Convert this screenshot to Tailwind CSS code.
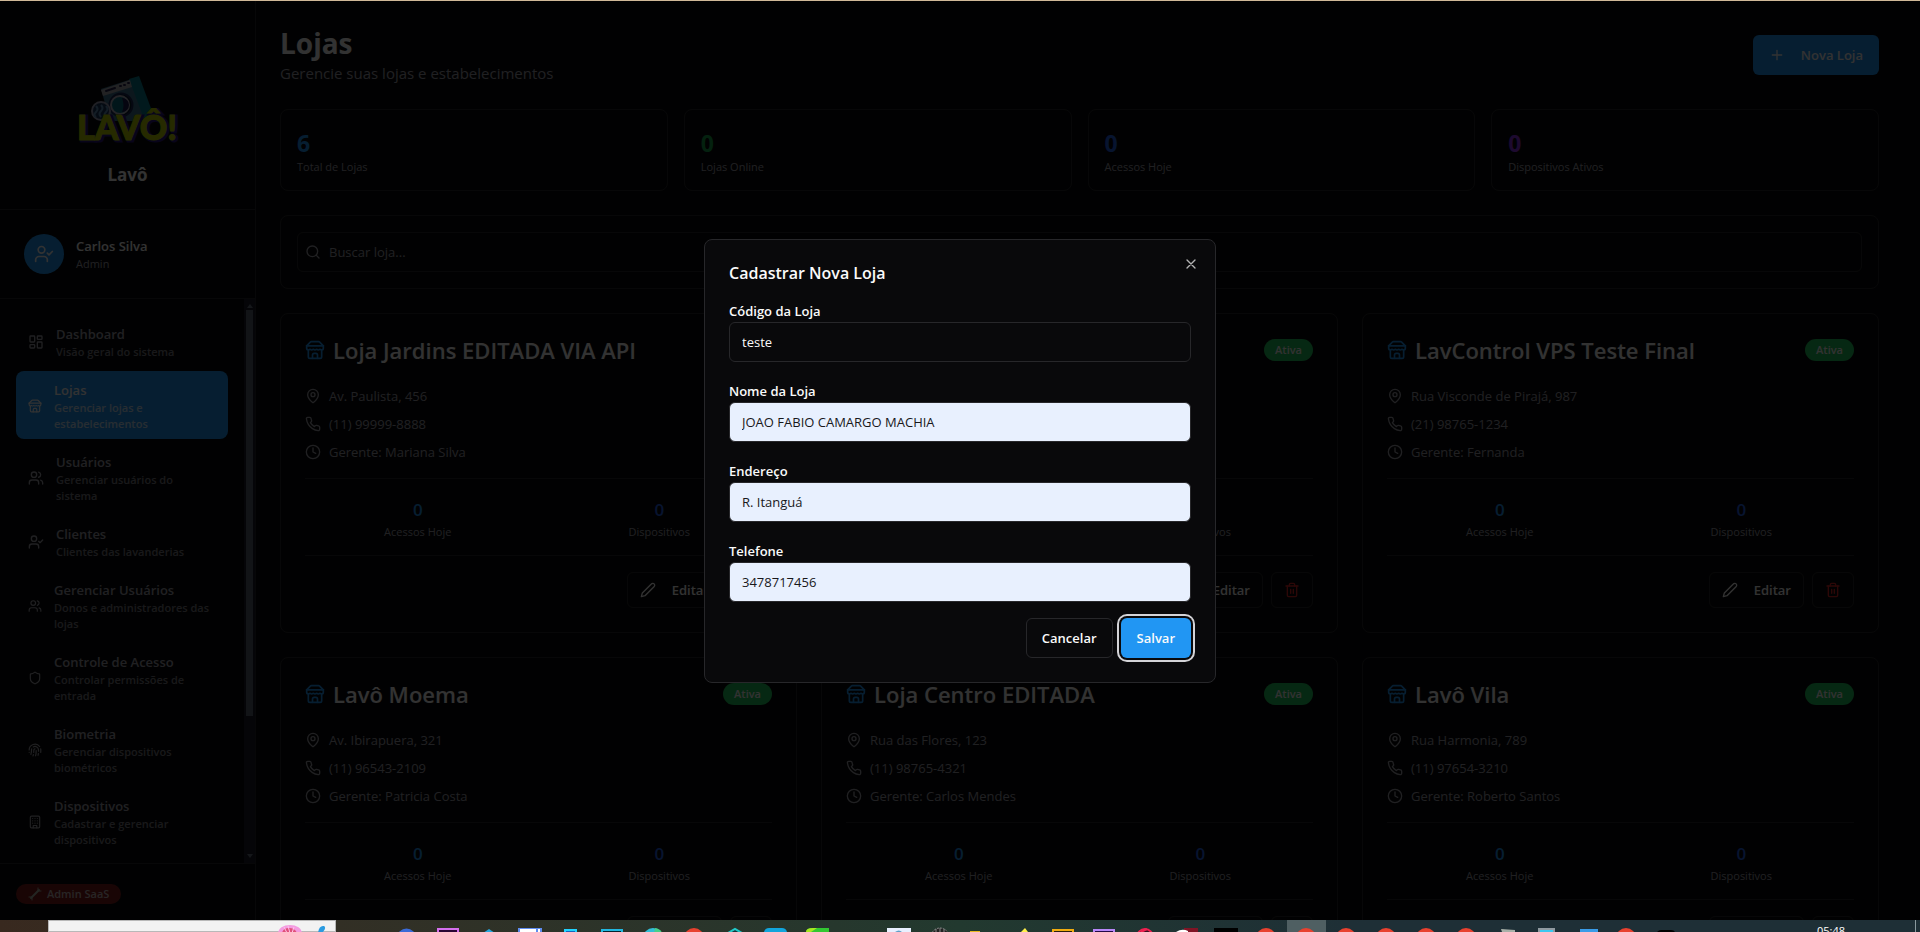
<!DOCTYPE html>
<html lang="pt-BR">
<head>
<meta charset="utf-8">
<title>Lavô - Lojas</title>
<script src="https://cdn.jsdelivr.net/npm/@tailwindcss/browser@4"></script>
</head>
<body class="flex h-screen flex-col overflow-hidden bg-[#09090b] font-['Open_Sans','Noto_Sans',sans-serif] text-[13px] leading-5 text-[#fafafa]">
<!-- Icon set -->
<svg class="hidden" aria-hidden="true">
  <symbol id="i-dashboard" viewBox="0 0 24 24"><rect width="7" height="9" x="3" y="3" rx="1"/><rect width="7" height="5" x="14" y="3" rx="1"/><rect width="7" height="9" x="14" y="12" rx="1"/><rect width="7" height="5" x="3" y="16" rx="1"/></symbol>
  <symbol id="i-store" viewBox="0 0 24 24"><path d="m2 7 4.41-4.41A2 2 0 0 1 7.83 2h8.34a2 2 0 0 1 1.42.59L22 7"/><path d="M4 12v8a2 2 0 0 0 2 2h12a2 2 0 0 0 2-2v-8"/><path d="M15 22v-4a2 2 0 0 0-2-2h-2a2 2 0 0 0-2 2v4"/><path d="M2 7h20"/><path d="M22 7v3a2 2 0 0 1-2 2a2.7 2.7 0 0 1-1.59-.63.7.7 0 0 0-.82 0A2.7 2.7 0 0 1 16 12a2.7 2.7 0 0 1-1.59-.63.7.7 0 0 0-.82 0A2.7 2.7 0 0 1 12 12a2.7 2.7 0 0 1-1.59-.63.7.7 0 0 0-.82 0A2.7 2.7 0 0 1 8 12a2.7 2.7 0 0 1-1.59-.63.7.7 0 0 0-.82 0A2.7 2.7 0 0 1 4 12a2 2 0 0 1-2-2V7"/></symbol>
  <symbol id="i-users" viewBox="0 0 24 24"><path d="M16 21v-2a4 4 0 0 0-4-4H6a4 4 0 0 0-4 4v2"/><circle cx="9" cy="7" r="4"/><path d="M22 21v-2a4 4 0 0 0-3-3.87"/><path d="M16 3.13a4 4 0 0 1 0 7.75"/></symbol>
  <symbol id="i-user-check" viewBox="0 0 24 24"><path d="M16 21v-2a4 4 0 0 0-4-4H6a4 4 0 0 0-4 4v2"/><circle cx="9" cy="7" r="4"/><path d="m16 11 2 2 4-4"/></symbol>
  <symbol id="i-shield" viewBox="0 0 24 24"><path d="M20 13c0 5-3.5 7.5-7.66 8.95a1 1 0 0 1-.67-.01C7.5 20.5 4 18 4 13V6a1 1 0 0 1 1-1c2 0 4.5-1.2 6.24-2.72a1.17 1.17 0 0 1 1.52 0C14.51 3.81 17 5 19 5a1 1 0 0 1 1 1z"/></symbol>
  <symbol id="i-finger" viewBox="0 0 24 24"><path d="M12 10a2 2 0 0 0-2 2c0 1.02-.1 2.51-.26 4"/><path d="M14 13.12c0 2.38 0 6.38-1 8.88"/><path d="M17.29 21.02c.12-.6.43-2.3.5-3.02"/><path d="M2 12a10 10 0 0 1 18-6"/><path d="M2 16h.01"/><path d="M21.8 16c.2-2 .131-5.354 0-6"/><path d="M5 19.5C5.5 18 6 15 6 12a6 6 0 0 1 .34-2"/><path d="M8.65 22c.21-.66.45-1.32.57-2"/><path d="M9 6.8a6 6 0 0 1 9 5.2v2"/></symbol>
  <symbol id="i-building" viewBox="0 0 24 24"><rect width="16" height="20" x="4" y="2" rx="2"/><path d="M9 22v-4h6v4M8 6h.01M16 6h.01M12 6h.01M12 10h.01M12 14h.01M16 10h.01M16 14h.01M8 10h.01M8 14h.01"/></symbol>
  <symbol id="i-search" viewBox="0 0 24 24"><circle cx="11" cy="11" r="8"/><path d="m21 21-4.3-4.3"/></symbol>
  <symbol id="i-pin" viewBox="0 0 24 24"><path d="M20 10c0 4.993-5.539 10.193-7.399 11.799a1 1 0 0 1-1.202 0C9.539 20.193 4 14.993 4 10a8 8 0 0 1 16 0"/><circle cx="12" cy="10" r="3"/></symbol>
  <symbol id="i-phone" viewBox="0 0 24 24"><path d="M22 16.92v3a2 2 0 0 1-2.18 2 19.79 19.79 0 0 1-8.63-3.07 19.5 19.5 0 0 1-6-6 19.79 19.79 0 0 1-3.07-8.67A2 2 0 0 1 4.11 2h3a2 2 0 0 1 2 1.72 12.84 12.84 0 0 0 .7 2.81 2 2 0 0 1-.45 2.11L8.09 9.91a16 16 0 0 0 6 6l1.27-1.27a2 2 0 0 1 2.11-.45 12.84 12.84 0 0 0 2.81.7A2 2 0 0 1 22 16.92z"/></symbol>
  <symbol id="i-clock" viewBox="0 0 24 24"><circle cx="12" cy="12" r="10"/><path d="M12 6v6l4 2"/></symbol>
  <symbol id="i-pen" viewBox="0 0 24 24"><path d="M17 3a2.85 2.83 0 1 1 4 4L7.5 20.5 2 22l1.5-5.5Z"/></symbol>
  <symbol id="i-trash" viewBox="0 0 24 24"><path d="M3 6h18"/><path d="M19 6v14c0 1-1 2-2 2H7c-1 0-2-1-2-2V6"/><path d="M8 6V4c0-1 1-2 2-2h4c1 0 2 1 2 2v2"/><path d="M10 11v6M14 11v6"/></symbol>
  <symbol id="i-plus" viewBox="0 0 24 24"><path d="M5 12h14M12 5v14"/></symbol>
  <symbol id="i-x" viewBox="0 0 24 24"><path d="M18 6 6 18M6 6l12 12"/></symbol>
</svg>

<div class="h-px shrink-0 bg-[#d0b898]"></div>

<div class="relative flex min-h-0 flex-1">
  <!-- Sidebar -->
  <aside class="flex w-64 shrink-0 flex-col border-r border-[#27272a]">
    <div class="flex h-[209px] shrink-0 flex-col items-center border-b border-[#27272a] pt-[72px]">
      <svg class="h-[72px] w-[112px]" viewBox="0 0 112 72" role="img" aria-label="Lavô!">
        <path d="M29 16 66 4 78 38 74 48H38z" fill="#3f7390"/>
        <path d="m57 6 10-3 13 35-8 8z" fill="#087f90"/>
        <path d="m29 17 29-10 2 7-29 9z" fill="#a8a8b0"/>
        <path d="m34 18 9-3M48 13h1M52 12h1M56 10h1" stroke="#24204a" stroke-width="2" stroke-linecap="round"/>
        <circle cx="49" cy="32" r="11.500" fill="#08192c" stroke="#1d2a58" stroke-width="2"/>
        <circle cx="48" cy="32" r="9" fill="#087080" stroke="#b4b4c4" stroke-width="2"/>
        <path d="M50 25a7 7 0 0 1 0 14c2-4 2-9 0-14z" fill="#1c1a50"/>
        <circle cx="29" cy="38" r="9" fill="#1c3a60" stroke="#a0a0b8" stroke-width="2"/>
        <path d="M24 33q3 3 0 6t0 5M29 32q3 3 0 6t0 6M34 33q3 3 0 6t0 4" fill="none" stroke="#6090b8" stroke-width="2"/>
        <g font-family="Lato" font-weight="900" font-size="34">
          <text x="7" y="68" fill="#2a1880" stroke="#2a1880" stroke-width="3" aria-hidden="true">LAVÔ!</text>
          <text x="5" y="67" fill="#bcd200" stroke="#bcd200" stroke-width="1">LAVÔ!</text>
        </g>
      </svg>
      <h2 class="mt-4 text-[17px] leading-7 font-bold">Lavô</h2>
    </div>
    <div class="flex shrink-0 items-center gap-3 border-b border-[#27272a] p-6">
      <div class="flex size-10 items-center justify-center rounded-full bg-[#2196f3]"><svg class="size-5 fill-none stroke-current stroke-2" stroke-linecap="round" stroke-linejoin="round"><use href="#i-user-check"/></svg></div>
      <div><p class="font-semibold">Carlos Silva</p><p class="text-[11px] leading-4 text-[#a1a1aa]">Admin</p></div>
    </div>
    <div class="flex min-h-0 flex-1">
      <nav id="nav" class="flex min-w-0 flex-1 flex-col gap-1 overflow-hidden p-4 font-semibold text-[#a1a1aa]"></nav>
      <!-- Scroll track -->
      <div class="flex w-[11px] flex-col items-center justify-between bg-[#1a1c2c] pt-1 pb-1">
        <svg class="h-[6px] w-[6px] shrink-0 fill-[#6b7280]" viewBox="0 0 6 6"><path d="m0 5 3-4 3 4z"/></svg>
        <div class="mt-px mb-auto h-[73%] w-[7px] bg-[#5c6674]"></div>
        <svg class="h-[6px] w-[6px] shrink-0 fill-[#6b7280]" viewBox="0 0 6 6"><path d="m0 1 3 4 3-4z"/></svg>
      </div>
    </div>
    <div class="flex h-[57px] shrink-0 items-center border-t border-[#27272a] px-4">
      <span class="mt-1 flex h-5 items-center gap-[5px] rounded-full bg-[#7f1d1d] px-3 text-[11px] font-semibold text-[#c4b8b8]">
        <svg class="size-3.5 fill-none stroke-[#b0b8a8]" viewBox="0 0 14 14" stroke-linecap="round"><path d="m3 11 8-8" stroke-width="2"/><path d="M10 1v3h3M1 10h3v3" stroke-width="1"/></svg>
        Admin SaaS
      </span>
    </div>
  </aside>

  <!-- Page -->
  <main class="flex min-w-0 flex-1 flex-col gap-6 overflow-hidden py-6 pr-[41px] pl-6">
    <div class="flex items-center justify-between">
      <div><h1 class="text-[28px] leading-9 font-bold">Lojas</h1><p class="text-[15px] leading-6 text-[#a1a1aa]">Gerencie suas lojas e estabelecimentos</p></div>
      <button type="button" class="flex h-10 items-center gap-4 rounded-md bg-[#2196f3] px-4 font-semibold"><svg class="size-4 fill-none stroke-current stroke-2" stroke-linecap="round"><use href="#i-plus"/></svg>Nova Loja</button>
    </div>
    <div class="grid shrink-0 grid-cols-4 gap-4">
      <div class="rounded-lg border border-[#27272a] px-4 pt-[17px] pb-[15px]"><div class="text-[23px] leading-8 font-bold text-[#2196f3]">6</div><p class="text-[11px] leading-4 text-[#a1a1aa]">Total de Lojas</p></div>
      <div class="rounded-lg border border-[#27272a] px-4 pt-[17px] pb-[15px]"><div class="text-[23px] leading-8 font-bold text-[#16a34a]">0</div><p class="text-[11px] leading-4 text-[#a1a1aa]">Lojas Online</p></div>
      <div class="rounded-lg border border-[#27272a] px-4 pt-[17px] pb-[15px]"><div class="text-[23px] leading-8 font-bold text-[#2563eb]">0</div><p class="text-[11px] leading-4 text-[#a1a1aa]">Acessos Hoje</p></div>
      <div class="rounded-lg border border-[#27272a] px-4 pt-[17px] pb-[15px]"><div class="text-[23px] leading-8 font-bold text-[#9333ea]">0</div><p class="text-[11px] leading-4 text-[#a1a1aa]">Dispositivos Ativos</p></div>
    </div>
    <div class="shrink-0 rounded-lg border border-[#27272a] p-4">
      <label class="flex h-10 items-center gap-2 rounded-md border border-[#27272a] px-[7px]">
        <svg class="size-4 shrink-0 fill-none stroke-[#a1a1aa] stroke-2" stroke-linecap="round"><use href="#i-search"/></svg>
        <input type="search" aria-label="Buscar loja" placeholder="Buscar loja..." class="w-full bg-transparent outline-none placeholder:text-[#a1a1aa]">
      </label>
    </div>
    <div id="stores" class="grid shrink-0 grid-cols-3 gap-6"></div>
  </main>

  <!-- Overlay and dialog -->
  <div class="absolute inset-0 flex items-center justify-center bg-black/80 pt-px">
    <form role="dialog" aria-labelledby="dlg" class="relative flex w-full max-w-lg flex-col gap-4 rounded-lg border border-[#27272a] bg-[#09090b] p-6">
      <h2 id="dlg" class="text-[16px] leading-[18px] font-semibold">Cadastrar Nova Loja</h2>
      <button type="button" aria-label="Fechar" class="absolute top-4 right-4 opacity-70"><svg class="size-4 fill-none stroke-current stroke-2" stroke-linecap="round"><use href="#i-x"/></svg></button>
      <div><label for="f1" class="block pt-0.5 leading-[22px] font-semibold">Código da Loja</label><input id="f1" value="teste" class="h-10 w-full rounded-md border border-[#27272a] bg-[#09090b] px-3 outline-none"></div>
      <div><label for="f2" class="block pt-0.5 leading-[22px] font-semibold">Nome da Loja</label><input id="f2" value="JOAO FABIO CAMARGO MACHIA" class="h-10 w-full rounded-md border border-[#27272a] bg-[#e8f0fe] px-3 text-[#18181b] outline-none"></div>
      <div><label for="f3" class="block pt-0.5 leading-[22px] font-semibold">Endereço</label><input id="f3" value="R. Itanguá" class="h-10 w-full rounded-md border border-[#27272a] bg-[#e8f0fe] px-3 text-[#18181b] outline-none"></div>
      <div><label for="f4" class="block pt-0.5 leading-[22px] font-semibold">Telefone</label><input id="f4" value="3478717456" class="h-10 w-full rounded-md border border-[#27272a] bg-[#e8f0fe] px-3 text-[#18181b] outline-none"></div>
      <div class="flex justify-end gap-2">
        <button type="button" class="h-10 rounded-md border border-[#27272a] px-[15px] font-semibold">Cancelar</button>
        <button type="submit" class="h-10 rounded-md bg-[#2196f3] px-4 font-semibold ring-2 ring-[#d4d4d8] ring-offset-2 ring-offset-[#09090b]">Salvar</button>
      </div>
    </form>
  </div>
</div>

<!-- Desktop taskbar, cut off by the screen edge -->
<footer class="flex h-3 shrink-0 overflow-hidden bg-linear-to-r from-[#38291f] via-[#22392f] via-50% to-[#1e2f36] to-70%">
  <div class="ml-12 flex w-72 shrink-0 justify-end border border-[#b8b8b8] bg-[#f2f2f2] pr-2">
    <svg class="h-3 w-[52px]" viewBox="0 0 52 12"><ellipse cx="15" cy="12" rx="12" ry="8" fill="#f39be0"/><path d="M7 12q1-5 7-5t8 5z" fill="#e0517a"/><path d="m13 5 2 7M19 6l-2 6M9 6l3 6" stroke="#ffc0ea"/><path d="M43 12q1-8 6-7 3 2-2 7z" fill="#2b9be0"/></svg>
  </div>
  <svg class="h-3 w-[1364px] shrink-0" viewBox="336 0 1364 12">
    <path fill="#4f5f62" d="M1287 0h39v12h-39z"/>
    <circle cx="406.500" cy="18" r="9.500" fill="#3b6bd8"/>
    <path d="M438 14V9h20v5" fill="#2a0634" stroke="#d570ee" stroke-width="2"/>
    <path d="m483 13 6-4 6 4z" fill="#28a8e0"/>
    <path d="M518 8h24v4h-24z" fill="#5f8df0"/><path d="M520 9h16v3h-16zM538 9h2v3h-2z" fill="#fff"/>
    <path d="M565 14v-4h11v4" fill="#1565c0" stroke="#22d3ff" stroke-width="2"/>
    <path d="M602 14v-4h20v4" fill="#062430" stroke="#22b8e0" stroke-width="2"/>
    <circle cx="653" cy="18" r="10" fill="#32bfd8"/><path d="M655 8q6 1 7 5h-8z" fill="#48d08a"/>
    <path d="m728 13 7-4 7 4" fill="#17343a" stroke="#22c8c8" stroke-width="2"/>
    <path d="M764 12q1-4 5-4h13q4 0 5 4z" fill="#12a5dc"/>
    <path d="M806 12q0-4 7-4h16v4z" fill="#32c832"/><path d="M806 12q0-4 7-4h4l-6 4z" fill="#a8e820"/>
    <path d="M887 8h24v4h-24z" fill="#e8f0ff"/><path d="M895 12q4-3 7 0z" fill="#5fa0c8"/>
    <circle cx="940" cy="17" r="9" fill="#222" stroke="#888" stroke-dasharray="2 1"/><path d="M936 12V9M940 12V8M944 12V9" stroke="#888"/>
    <path d="M970 11h10v1h-10z" fill="#e8b820"/>
    <path d="m1021 12 4-4 3 4z" fill="#fff04a"/>
    <path d="M1053 14v-4h20v4" fill="#2c200a" stroke="#f0ac10" stroke-width="2"/>
    <path d="M1094 14v-4h20v4" fill="#240a48" stroke="#b888f8" stroke-width="2"/>
    <circle cx="1145" cy="17" r="8" fill="#3a1020" stroke="#f02050" stroke-width="2"/><path d="m1141 12 6-3" stroke="#f02050" stroke-width="2"/>
    <path d="M1184 8h14v4h-14z" fill="#801425"/><path d="M1176 12q6-4 12-1v1z" fill="#fff"/>
    <path fill="#000" d="M1214 8h24v4h-24zM1657 12q2-2 4-2h10q3 0 4 2z"/>
    <g fill="#e8412f"><circle cx="694" cy="18" r="10"/><circle cx="1266" cy="18" r="10"/><circle cx="1306" cy="18" r="10"/><circle cx="1346" cy="18" r="10"/><circle cx="1386" cy="18" r="10"/><circle cx="1426" cy="18" r="10"/><circle cx="1466" cy="18" r="10"/><circle cx="1626" cy="18" r="10"/></g>
    <path d="m1501 9 14 1v2h-13z" fill="#a8b0a8"/>
    <path d="M1538 8h17v4h-17z" fill="#909aa0"/><path d="M1540 10h13v2h-13z" fill="#3cc8f0"/>
    <path d="M1580 9h18v3h-18z" fill="#3a9ce8"/>
  </svg>
  <time class="mt-1 mr-[70px] ml-auto text-[11px] leading-[14px] text-white">05:48</time>
  <div class="mr-1 w-px shrink-0 bg-[#8a9a9e]"></div>
</footer>

<script>
const icon = (name, cls) => `<svg class="${cls} shrink-0 fill-none stroke-current stroke-2" stroke-linecap="round" stroke-linejoin="round"><use href="#i-${name}"/></svg>`;

const links = [
  ['dashboard', 'Dashboard', 'Visão geral do sistema', 'size-4'],
  ['store', 'Lojas', 'Gerenciar lojas e estabelecimentos', 'size-3.5'],
  ['users', 'Usuários', 'Gerenciar usuários do<br>sistema', 'size-4'],
  ['user-check', 'Clientes', 'Clientes das lavanderias', 'size-4'],
  ['users', 'Gerenciar Usuários', 'Donos e administradores das lojas', 'size-3.5'],
  ['shield', 'Controle de Acesso', 'Controlar permissões de<br>entrada', 'size-3.5'],
  ['finger', 'Biometria', 'Gerenciar dispositivos biométricos', 'size-3.5'],
  ['building', 'Dispositivos', 'Cadastrar e gerenciar dispositivos', 'size-3.5'],
];
document.getElementById('nav').innerHTML = links.map(([ic, title, sub, size], i) => `
  <a href="#" class="${i === 1 ? 'bg-[#2196f3] text-[#fafafa]' : ''} flex shrink-0 items-center gap-3 rounded-lg px-3 pt-[9px] pb-[7px]">
    ${icon(ic, size)}
    <span class="min-w-0"><span class="block">${title}</span><span class="block text-[11px] leading-4 opacity-75">${sub}</span></span>
  </a>`).join('');

const stores = [
  ['Loja Jardins EDITADA VIA API', 'Av. Paulista, 456', '(11) 99999-8888', 'Mariana Silva'],
  ['', '', '', ''],
  ['LavControl VPS Teste Final', 'Rua Visconde de Pirajá, 987', '(21) 98765-1234', 'Fernanda'],
  ['Lavô Moema', 'Av. Ibirapuera, 321', '(11) 96543-2109', 'Patricia Costa'],
  ['Loja Centro EDITADA', 'Rua das Flores, 123', '(11) 98765-4321', 'Carlos Mendes'],
  ['Lavô Vila', 'Rua Harmonia, 789', '(11) 97654-3210', 'Roberto Santos'],
];
document.getElementById('stores').innerHTML = stores.map(([name, addr, tel, boss]) => `
  <article class="rounded-lg border border-[#27272a] p-6">
    <div class="flex h-6 items-center gap-2">
      <span class="text-[#2196f3]">${icon('store', 'size-5')}</span>
      <h3 class="text-[22px] leading-6 font-semibold whitespace-nowrap">${name}</h3>
      <span class="ml-auto rounded-full bg-[#22c55e] px-[11px] py-[3px] text-[11px] leading-4 font-semibold">Ativa</span>
    </div>
    <ul class="mt-6 flex flex-col gap-2 text-[#a1a1aa]">
      <li class="flex h-5 items-center gap-2">${icon('pin', 'size-4')}${addr}</li>
      <li class="flex h-5 items-center gap-2">${icon('phone', 'size-4')}${tel}</li>
      <li class="flex h-5 items-center gap-2">${icon('clock', 'size-4')}Gerente: ${boss}</li>
    </ul>
    <div class="mt-4 grid grid-cols-2 gap-4 border-y border-[#27272a] pt-[17px] pb-[15px] text-center">
      <div><div class="text-[17px] leading-7 font-semibold text-[#2196f3]">0</div><p class="text-[11px] leading-4 text-[#a1a1aa]">Acessos Hoje</p></div>
      <div><div class="text-[17px] leading-7 font-semibold text-[#2563eb]">0</div><p class="text-[11px] leading-4 text-[#a1a1aa]">Dispositivos</p></div>
    </div>
    <div class="mt-4 flex justify-end gap-2">
      <button type="button" class="flex h-9 items-center gap-4 rounded-md border border-[#27272a] px-3 font-semibold">${icon('pen', 'size-4')}Editar</button>
      <button type="button" aria-label="Excluir" class="flex h-9 items-center rounded-md border border-[#27272a] px-3 text-[#dc2626]">${icon('trash', 'size-4')}</button>
    </div>
  </article>`).join('');
</script>
</body>
</html>
